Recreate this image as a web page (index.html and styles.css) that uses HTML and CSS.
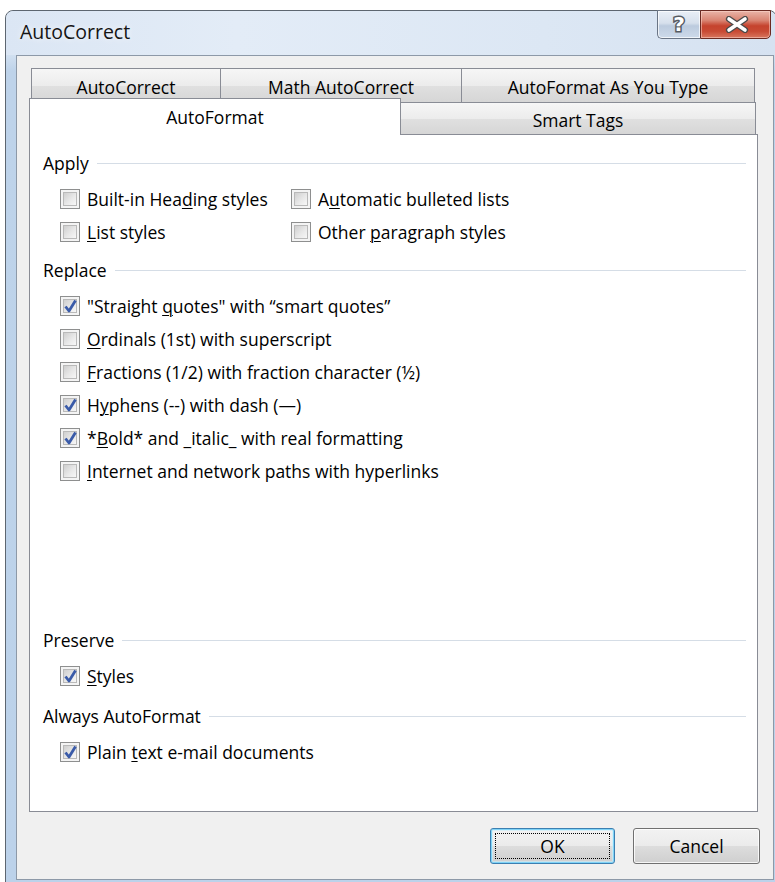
FILE: index.html
```html
<!DOCTYPE html>
<html lang="en">
<head>
<meta charset="utf-8">
<title>AutoCorrect</title>
<link rel="stylesheet" href="styles.css">
</head>
<body>
<div class="window">
  <div class="titlebar">
    <span class="title">AutoCorrect</span>
    <div class="caption-buttons">
      <div class="cap-btn help"><span class="help-glyph">?</span></div>
      <div class="cap-btn close">
        <svg width="24" height="17" viewBox="0 0 24 17" aria-hidden="true">
          <path d="M4 3 L20 14 M20 3 L4 14" stroke="#4a4a4a" stroke-width="6.2" stroke-linecap="round" fill="none"/>
          <path d="M4 3 L20 14 M20 3 L4 14" stroke="#ffffff" stroke-width="3.6" stroke-linecap="round" fill="none"/>
        </svg>
      </div>
    </div>
  </div>

  <div class="client">
    <div class="tabs">
      <div class="tabrow back">
        <div class="tab t-autocorrect">AutoCorrect</div>
        <div class="tab t-math">Math AutoCorrect</div>
        <div class="tab t-asyoutype">AutoFormat As You Type</div>
      </div>
      <div class="tabrow front">
        <div class="tab selected t-autoformat">AutoFormat</div>
        <div class="tab t-smarttags">Smart Tags</div>
      </div>
    </div>

    <div class="panel">
      <section class="group g-apply">
        <div class="group-head"><span>Apply</span></div>
        <div class="opts two-col">
          <label class="opt"><span class="box"></span><span>Built-in Hea<u>d</u>ing styles</span></label>
          <label class="opt"><span class="box"></span><span>A<u>u</u>tomatic bulleted lists</span></label>
          <label class="opt"><span class="box"></span><span><u>L</u>ist styles</span></label>
          <label class="opt"><span class="box"></span><span>Other <u>p</u>aragraph styles</span></label>
        </div>
      </section>

      <section class="group g-replace">
        <div class="group-head"><span>Replace</span></div>
        <div class="opts">
          <label class="opt"><span class="box checked"></span><span>"Straight <u>q</u>uotes" with “smart quotes”</span></label>
          <label class="opt"><span class="box"></span><span><u>O</u>rdinals (1st) with superscript</span></label>
          <label class="opt"><span class="box"></span><span><u>F</u>ractions (1/2) with fraction character (½)</span></label>
          <label class="opt"><span class="box checked"></span><span>H<u>y</u>phens (--) with dash (—)</span></label>
          <label class="opt"><span class="box checked"></span><span>*<u>B</u>old* and _italic_ with real formatting</span></label>
          <label class="opt"><span class="box"></span><span><u>I</u>nternet and network paths with hyperlinks</span></label>
        </div>
      </section>

      <section class="group g-preserve">
        <div class="group-head"><span>Preserve</span></div>
        <div class="opts">
          <label class="opt"><span class="box checked"></span><span><u>S</u>tyles</span></label>
        </div>
      </section>

      <section class="group g-always">
        <div class="group-head"><span>Always AutoFormat</span></div>
        <div class="opts">
          <label class="opt"><span class="box checked"></span><span>Plain <u>t</u>ext e-mail documents</span></label>
        </div>
      </section>
    </div>

    <div class="buttons">
      <button class="btn default"><span class="focus">OK</span></button>
      <button class="btn">Cancel</button>
    </div>
  </div>
</div>
</body>
</html>
```

FILE: styles.css
```css
html, body {
  margin: 0;
  padding: 0;
}

body {
  width: 775px;
  height: 882px;
  overflow: hidden;
  background: #ffffff;
  font-family: "Open Sans", "Noto Sans", sans-serif;
  font-size: 17.5px;
  color: #000;
  padding: 10px 0 0 5px;
  box-sizing: border-box;
}

/* ---------- window frame ---------- */
.window {
  width: 772px;
  height: 880px;
  box-sizing: border-box;
  border: 1px solid #5d6670;
  border-radius: 8px 8px 0 0;
  background: linear-gradient(180deg, #dbe6f3 0%, #d6e3f2 40px, #bed3ea 60px, #bcd2ea 100%);
  padding: 0 0 0 10px;
}

.titlebar {
  height: 44px;
  display: flex;
  align-items: flex-start;
  justify-content: space-between;
  padding-right: 5px;
  margin-left: -10px;
  padding-left: 14px;
  border-radius: 8px 8px 0 0;
  background: linear-gradient(90deg, #dbe6f4 0%, #e3ecf7 30%, #dce7f4 70%, #d6e2f1 100%);
}

.title {
  margin-top: 8px;
  font-size: 19.5px;
  line-height: 26px;
  color: #151515;
  text-shadow: 0 0 6px rgba(255, 255, 255, 0.9);
}

.caption-buttons {
  display: flex;
  margin-top: -1px;
}

.cap-btn {
  height: 29px;
  box-sizing: border-box;
  display: flex;
  align-items: center;
  justify-content: center;
}

.help {
  width: 43px;
  border: 1px solid #6a7585;
  border-right: none;
  border-radius: 0 0 0 5px;
  background: linear-gradient(180deg, #e9eff7 0%, #d6e0ec 45%, #bccbde 55%, #cddaea 100%);
  box-shadow: inset 0 0 0 1px rgba(255, 255, 255, 0.7);
}

.help-glyph {
  font-family: "DejaVu Sans", sans-serif;
  font-weight: bold;
  font-size: 20px;
  line-height: 20px;
  color: #ffffff;
  -webkit-text-stroke: 3px #555a61;
  paint-order: stroke fill;
  margin-top: -2px;
}

.close {
  width: 71px;
  border: 1px solid #6b2a22;
  border-radius: 0 0 5px 0;
  background: linear-gradient(180deg, #e9b4a8 0%, #d98472 35%, #c5432e 55%, #c84a34 75%, #d8765f 100%);
  box-shadow: inset 0 0 0 1px rgba(255, 220, 210, 0.5);
}

.close svg {
  margin-left: 3px;
}

/* ---------- client area ---------- */
.client {
  width: 758px;
  height: 825px;
  box-sizing: border-box;
  border: 1px solid #8d99a8;
  background: #f0f0f0;
  padding: 12px 0 0 12px;
  display: flex;
  flex-direction: column;
}

/* ---------- tabs ---------- */
.tabs {
  display: flex;
  flex-direction: column;
}

.tabrow {
  display: flex;
}

.tabrow.back {
  padding-left: 2px;
  height: 34px;
}

.tabrow.front {
  height: 32px;
  align-items: flex-start;
}

.tab {
  box-sizing: border-box;
  display: flex;
  align-items: center;
  justify-content: center;
  padding-top: 3px;
  border: 1px solid #898c95;
  border-bottom: none;
  background: linear-gradient(180deg, #f6f6f6 0%, #ececec 50%, #e0e0e0 51%, #d6d6d6 100%);
  white-space: nowrap;
}

.tabrow.back .tab {
  height: 34px;
}

.tabrow.back .tab + .tab {
  border-left: none;
}

.t-autocorrect { width: 190px; }
.t-math { width: 241px; }
.t-asyoutype { width: 293px; }

.t-autoformat {
  width: 372px;
}

.t-smarttags {
  width: 355px;
  height: 32px;
  border-left: none;
}

.tab.selected {
  position: relative;
  z-index: 1;
  height: 37px;
  margin-top: -4px;
  margin-bottom: -1px;
  background: #ffffff;
  padding-top: 0;
}

/* ---------- panel ---------- */
.panel {
  width: 729px;
  height: 678px;
  box-sizing: border-box;
  border: 1px solid #898c95;
  background: #ffffff;
  padding: 17px 11px 0 13px;
}

.group-head {
  display: flex;
  align-items: center;
  height: 22px;
  line-height: 22px;
}

.group-head::after {
  content: "";
  flex: 1;
  height: 1px;
  margin-left: 8px;
  background: #d5dde6;
}

.opts {
  margin-top: 8px;
  padding-left: 17px;
}

.opts.two-col {
  display: grid;
  grid-template-columns: 231px auto;
}

.opt {
  height: 33px;
  display: flex;
  align-items: center;
  gap: 7px;
  white-space: nowrap;
}

.opt u {
  text-decoration-thickness: 1px;
  text-underline-offset: 2px;
}

.g-replace { margin-top: 11px; }
.g-preserve { margin-top: 142px; }
.g-always { margin-top: 13px; }

/* ---------- check boxes ---------- */
.box {
  flex: none;
  width: 20px;
  height: 20px;
  box-sizing: border-box;
  border: 1px solid #8e8f8f;
  background: #f4f4f4;
  padding: 2px;
  display: flex;
}

.box::before {
  content: "";
  flex: 1;
  border: 1px solid #b9b9b9;
  background: linear-gradient(135deg, #cfcfcf 0%, #e8e8e8 55%, #f7f7f7 100%);
}

.box.checked {
  position: relative;
}

.box.checked::after {
  content: "";
  position: absolute;
  left: 2px;
  top: 1px;
  width: 15px;
  height: 16px;
  background: no-repeat center / contain url("data:image/svg+xml;utf8,<svg xmlns='http://www.w3.org/2000/svg' viewBox='0 0 15 16'><path d='M2.5 8.5 L6 13 L12.5 2.5' stroke='%233a5ba9' stroke-width='2.8' fill='none' stroke-linejoin='round'/></svg>");
}

/* ---------- dialog buttons ---------- */
.buttons {
  display: flex;
  justify-content: flex-end;
  gap: 18px;
  margin-top: 16px;
  padding-right: 13px;
}

.btn {
  height: 36px;
  box-sizing: border-box;
  font-family: inherit;
  font-size: 17.5px;
  color: #000;
  border: 1px solid #707070;
  border-radius: 3px;
  background: linear-gradient(180deg, #f2f2f2 0%, #ebebeb 50%, #dddddd 51%, #cfcfcf 100%);
  box-shadow: inset 0 0 0 1px rgba(255, 255, 255, 0.8);
  padding: 0;
  width: 127px;
}

.btn.default {
  width: 125px;
  border-color: #3c7fb1;
  box-shadow: inset 0 0 0 1px #7fd3f7, inset 0 0 0 2px rgba(200, 238, 252, 0.6);
  padding: 4px;
}

.btn .focus {
  display: flex;
  height: 100%;
  box-sizing: border-box;
  align-items: center;
  justify-content: center;
  border: 1px dotted #000;
}
```
